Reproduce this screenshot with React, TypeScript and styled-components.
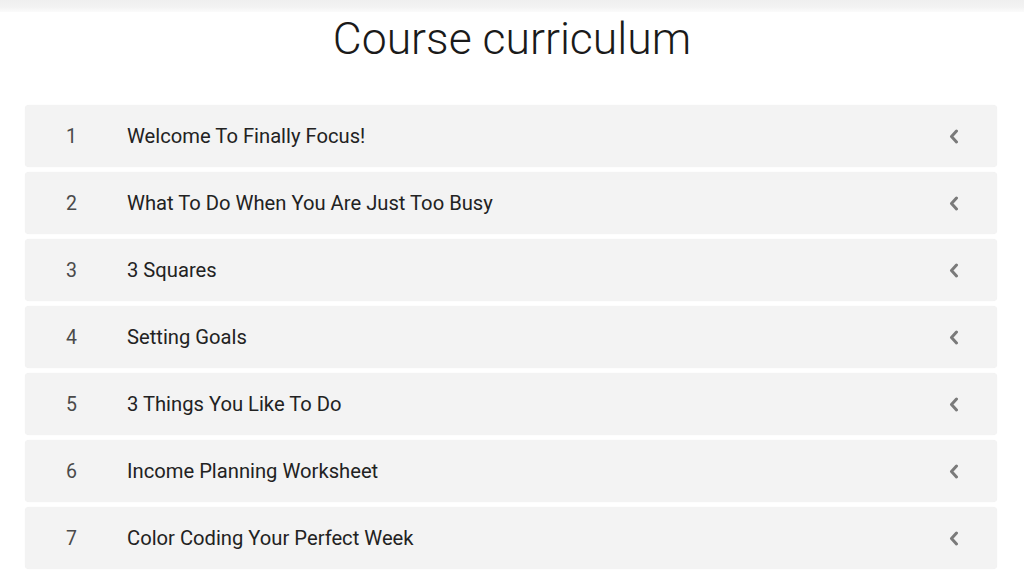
import React from 'react';
import styled, { createGlobalStyle } from 'styled-components';

const GlobalStyle = createGlobalStyle`
  html, body {
    margin: 0;
    padding: 0;
    background: #ffffff;
  }
  body {
    font-family: Roboto, "Liberation Sans", sans-serif;
  }
`;

const Page = styled.div`
  width: 1024px;
  height: 585px;
  overflow: hidden;
  background: #fff;
`;

const TopStrip = styled.div`
  height: 12px;
  background: linear-gradient(to bottom, #efefef 0%, #f3f3f3 60%, #fbfbfb 100%);
`;

const Title = styled.h1`
  margin: 0;
  padding-top: 3px;
  height: 90px;
  text-align: center;
  font-family: Roboto, "Liberation Sans", sans-serif;
  font-weight: 300;
  font-size: 44.5px;
  line-height: 48px;
  color: #1a1a1a;
`;

const List = styled.div`
  display: flex;
  flex-direction: column;
  gap: 5px;
  margin: 0 27px 0 25px;
`;

const Row = styled.div`
  display: flex;
  align-items: center;
  height: 62px;
  background: #f3f3f3;
  border-radius: 4px;
  box-shadow: 0 0 1px rgba(0, 0, 0, 0.08);
  color: #222;
`;

const Num = styled.span`
  width: 102px;
  padding-left: 41px;
  box-sizing: border-box;
  font-size: 19.5px;
  color: #4a4a4a;
`;

const Label = styled.span`
  flex: 1;
  font-size: 20.2px;
  color: #222;
`;

const Chevron = styled.svg`
  width: 10px;
  height: 15px;
  margin-right: 38px;
`;

const lessons = [
  'Welcome To Finally Focus!',
  'What To Do When You Are Just Too Busy',
  '3 Squares',
  'Setting Goals',
  '3 Things You Like To Do',
  'Income Planning Worksheet',
  'Color Coding Your Perfect Week',
];

export default function App() {
  return (
    <Page>
      <GlobalStyle />
      <TopStrip />
      <Title>Course curriculum</Title>
      <List>
        {lessons.map((lesson, i) => (
          <Row key={lesson}>
            <Num>{i + 1}</Num>
            <Label>{lesson}</Label>
            <Chevron viewBox="0 0 10 15">
              <polyline
                points="7.5,2 2.5,7.5 7.5,13"
                fill="none"
                stroke="#7a7a7a"
                strokeWidth="3"
                strokeLinecap="round"
                strokeLinejoin="round"
              />
            </Chevron>
          </Row>
        ))}
      </List>
    </Page>
  );
}
